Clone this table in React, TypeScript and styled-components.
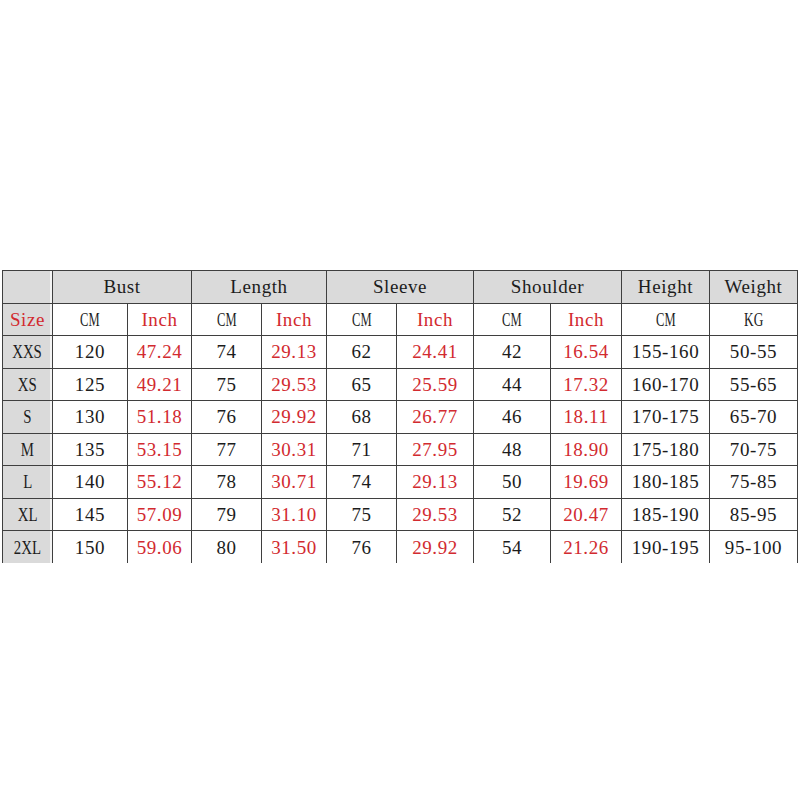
import React from 'react';
import styled, { createGlobalStyle } from 'styled-components';

const GlobalStyle = createGlobalStyle`
	html, body {
		margin: 0;
		padding: 0;
		background: #ffffff;
	}
`;

const Page = styled.div`
	width: 800px;
	height: 800px;
	padding: 270px 0 0 2px;
	box-sizing: border-box;
	background: #ffffff;
`;

const Table = styled.table`
	border-collapse: collapse;
	table-layout: fixed;
	width: 795px;
	font-family: 'Liberation Serif', 'DejaVu Serif', serif;
	font-size: 19px;
	letter-spacing: 0.6px;
	color: #1c1c1c;
`;

const Row = styled.tr`
	height: 32.5px;
`;

const Cell = styled.td<{ $gray?: boolean; $red?: boolean; $last?: boolean; $side?: boolean }>`
	border: 1px solid #3f3f3f;
	border-bottom: ${({ $last }) => ($last ? 'none' : '1px solid #3f3f3f')};
	padding: 1px 0 0;
	text-align: center;
	vertical-align: middle;
	white-space: nowrap;
	background: ${({ $gray }) => ($gray ? '#dadada' : '#ffffff')};
	color: ${({ $red }) => ($red ? '#d22a2f' : '#1c1c1c')};
	box-shadow: ${({ $side }) => ($side ? 'inset -2px 0 0 #f4f4f4' : 'none')};
`;

// capitals in the original font are half-width, so squeeze them
const Narrow = styled.span<{ $scale?: number }>`
	display: inline-block;
	letter-spacing: 0;
	transform: scaleX(${({ $scale }) => $scale ?? 0.7});
`;

const widths = [50, 75, 64, 70, 65, 70, 77, 77, 71, 88, 88];

const groups = ['Bust', 'Length', 'Sleeve', 'Shoulder'];

const rows = [
	['XXS', '120', '47.24', '74', '29.13', '62', '24.41', '42', '16.54', '155-160', '50-55'],
	['XS', '125', '49.21', '75', '29.53', '65', '25.59', '44', '17.32', '160-170', '55-65'],
	['S', '130', '51.18', '76', '29.92', '68', '26.77', '46', '18.11', '170-175', '65-70'],
	['M', '135', '53.15', '77', '30.31', '71', '27.95', '48', '18.90', '175-180', '70-75'],
	['L', '140', '55.12', '78', '30.71', '74', '29.13', '50', '19.69', '180-185', '75-85'],
	['XL', '145', '57.09', '79', '31.10', '75', '29.53', '52', '20.47', '185-190', '85-95'],
	['2XL', '150', '59.06', '80', '31.50', '76', '29.92', '54', '21.26', '190-195', '95-100'],
];

const isInch = (i: number) => i === 2 || i === 4 || i === 6 || i === 8;

export default function App() {
	return (
		<>
			<GlobalStyle />
			<Page>
				<Table>
					<colgroup>
						{widths.map((w, i) => (
							<col key={i} style={{ width: w }} />
						))}
					</colgroup>
					<tbody>
						<Row>
							<Cell $gray $side />
							{groups.map((g) => (
								<Cell key={g} colSpan={2} $gray>
									{g}
								</Cell>
							))}
							<Cell $gray>Height</Cell>
							<Cell $gray>Weight</Cell>
						</Row>
						<Row>
							<Cell $gray $red $side>
								Size
							</Cell>
							{groups.map((g) => (
								<React.Fragment key={g}>
									<Cell>
										<Narrow $scale={0.66}>CM</Narrow>
									</Cell>
									<Cell $red>Inch</Cell>
								</React.Fragment>
							))}
							<Cell>
								<Narrow $scale={0.66}>CM</Narrow>
							</Cell>
							<Cell>
								<Narrow $scale={0.7}>KG</Narrow>
							</Cell>
						</Row>
						{rows.map((r, ri) => {
							const last = ri === rows.length - 1;
							return (
								<Row key={r[0]}>
									{r.map((v, i) => (
										<Cell
											key={i}
											$gray={i === 0}
											$side={i === 0}
											$red={isInch(i)}
											$last={last}
										>
											{i === 0 ? <Narrow $scale={0.78}>{v}</Narrow> : v}
										</Cell>
									))}
								</Row>
							);
						})}
					</tbody>
				</Table>
			</Page>
		</>
	);
}
